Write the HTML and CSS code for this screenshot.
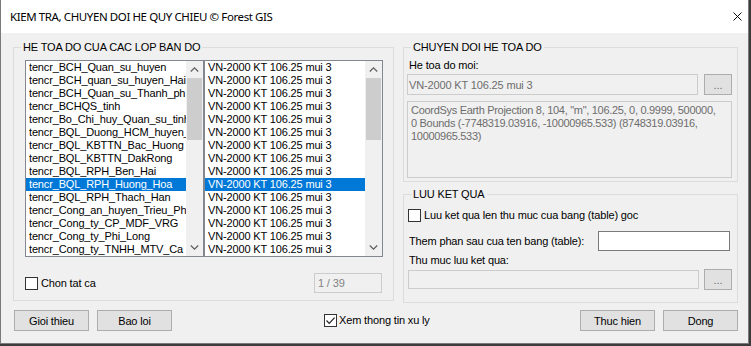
FILE: index.html
```html
<!DOCTYPE html>
<html>
  <head>
    <meta charset="UTF-8">
    <title>KIEM TRA, CHUYEN DOI HE QUY CHIEU</title>
    <link rel="stylesheet" href="styles.css">
  </head>
  <body>
    <div class="window">
      <div class="titlebar">
        <span class="title">KIEM TRA, CHUYEN DOI HE QUY CHIEU © Forest GIS</span>
        <svg class="close" width="9" height="9" viewBox="0 0 9 9">
          <path d="M0.5 0.5 L8.5 8.5 M8.5 0.5 L0.5 8.5" stroke="#111" stroke-width="1" fill="none"/>
        </svg>
      </div>

      <div class="main">
        <fieldset class="group layers">
          <legend>HE TOA DO CUA CAC LOP BAN DO</legend>
          <div class="layers-body">
            <div class="lists">
              <div class="listbox">
                <ul class="items">
                  <li>tencr_BCH_Quan_su_huyen</li>
                  <li>tencr_BCH_quan_su_huyen_Hai</li>
                  <li>tencr_BCH_Quan_su_Thanh_ph</li>
                  <li>tencr_BCHQS_tinh</li>
                  <li>tencr_Bo_Chi_huy_Quan_su_tinh</li>
                  <li>tencr_BQL_Duong_HCM_huyen_</li>
                  <li>tencr_BQL_KBTTN_Bac_Huong</li>
                  <li>tencr_BQL_KBTTN_DakRong</li>
                  <li>tencr_BQL_RPH_Ben_Hai</li>
                  <li class="selected">tencr_BQL_RPH_Huong_Hoa</li>
                  <li>tencr_BQL_RPH_Thach_Han</li>
                  <li>tencr_Cong_an_huyen_Trieu_Ph</li>
                  <li>tencr_Cong_ty_CP_MDF_VRG</li>
                  <li>tencr_Cong_ty_Phi_Long</li>
                  <li>tencr_Cong_ty_TNHH_MTV_Ca</li>
                </ul>
                <div class="scrollbar">
                  <div class="arrow">
                    <svg width="9" height="5" viewBox="0 0 9 5"><path d="M0.8 4.5 L4.5 0.9 L8.2 4.5" stroke="#606060" stroke-width="1.3" fill="none"/></svg>
                  </div>
                  <div class="track"><div class="thumb"></div></div>
                  <div class="arrow">
                    <svg width="9" height="5" viewBox="0 0 9 5"><path d="M0.8 0.5 L4.5 4.1 L8.2 0.5" stroke="#606060" stroke-width="1.3" fill="none"/></svg>
                  </div>
                </div>
              </div>
              <div class="listbox">
                <ul class="items">
                  <li>VN-2000 KT 106.25 mui 3</li>
                  <li>VN-2000 KT 106.25 mui 3</li>
                  <li>VN-2000 KT 106.25 mui 3</li>
                  <li>VN-2000 KT 106.25 mui 3</li>
                  <li>VN-2000 KT 106.25 mui 3</li>
                  <li>VN-2000 KT 106.25 mui 3</li>
                  <li>VN-2000 KT 106.25 mui 3</li>
                  <li>VN-2000 KT 106.25 mui 3</li>
                  <li>VN-2000 KT 106.25 mui 3</li>
                  <li class="selected">VN-2000 KT 106.25 mui 3</li>
                  <li>VN-2000 KT 106.25 mui 3</li>
                  <li>VN-2000 KT 106.25 mui 3</li>
                  <li>VN-2000 KT 106.25 mui 3</li>
                  <li>VN-2000 KT 106.25 mui 3</li>
                  <li>VN-2000 KT 106.25 mui 3</li>
                </ul>
                <div class="scrollbar">
                  <div class="arrow">
                    <svg width="9" height="5" viewBox="0 0 9 5"><path d="M0.8 4.5 L4.5 0.9 L8.2 4.5" stroke="#606060" stroke-width="1.3" fill="none"/></svg>
                  </div>
                  <div class="track"><div class="thumb"></div></div>
                  <div class="arrow">
                    <svg width="9" height="5" viewBox="0 0 9 5"><path d="M0.8 0.5 L4.5 4.1 L8.2 0.5" stroke="#606060" stroke-width="1.3" fill="none"/></svg>
                  </div>
                </div>
              </div>
            </div>
            <div class="select-row">
              <label class="check"><span class="box"></span>Chon tat ca</label>
              <div class="counter">1 / 39</div>
            </div>
          </div>
        </fieldset>

        <div class="side">
          <fieldset class="group convert">
            <legend>CHUYEN DOI HE TOA DO</legend>
            <div class="convert-body">
              <div class="field-label">He toa do moi:</div>
              <div class="field-row">
                <div class="textbox disabled">VN-2000 KT 106.25 mui 3</div>
                <button class="browse">...</button>
              </div>
              <div class="memo">
                CoordSys Earth Projection 8, 104, "m", 106.25, 0, 0.9999, 500000,<br>
                0 Bounds (-7748319.03916, -10000965.533) (8748319.03916,<br>
                10000965.533)
              </div>
            </div>
          </fieldset>

          <fieldset class="group result">
            <legend>LUU KET QUA</legend>
            <div class="result-body">
              <label class="check"><span class="box"></span>Luu ket qua len thu muc cua bang (table) goc</label>
              <div class="suffix-row">
                <span class="suffix-label">Them phan sau cua ten bang (table):</span>
                <div class="textbox suffix"></div>
              </div>
              <div class="field-label folder-label">Thu muc luu ket qua:</div>
              <div class="field-row folder-row">
                <div class="textbox disabled"></div>
                <button class="browse">...</button>
              </div>
            </div>
          </fieldset>
        </div>
      </div>

      <div class="footer">
        <button class="btn">Gioi thieu</button>
        <button class="btn">Bao loi</button>
        <label class="check show-log">
          <span class="box">
            <svg width="11" height="11" viewBox="0 0 11 11"><path d="M1.5 5.5 L4.2 8.3 L9.6 2.6" stroke="#222" stroke-width="1.2" fill="none"/></svg>
          </span>Xem thong tin xu ly
        </label>
        <button class="btn run">Thuc hien</button>
        <button class="btn">Dong</button>
      </div>
    </div>
  </body>
</html>
```

FILE: styles.css
```css
* {
  box-sizing: border-box;
}

body {
  margin: 0;
  background-color: #3c3c3c;
  font-family: "Liberation Sans", Arial, sans-serif;
  font-size: 11px;
  letter-spacing: -0.15px;
  color: #000;
}

.window {
  width: 749px;
  height: 344px;
  background-color: #f0f0f0;
  border: 1px solid #7a7a7a;
  border-top: none;
}

.titlebar {
  height: 33px;
  background-color: #fff;
  display: flex;
  align-items: center;
  justify-content: space-between;
  padding: 0 6px 0 9px;
}

.title {
  font-family: "Noto Sans", sans-serif;
  font-size: 11.5px;
  letter-spacing: -0.4px;
}

.close {
  display: block;
}

.main {
  display: flex;
  align-items: flex-start;
  gap: 9px;
  padding: 8px 10px 0 12px;
  height: 270px;
}

/* group boxes */

.group {
  margin: 0;
  padding: 0;
  min-width: 0;
  border: 1px solid #dcdcdc;
}

.group legend {
  margin-left: 7px;
  padding: 0 2px;
  line-height: 13px;
}

.layers {
  width: 381px;
  height: 260px;
}

.layers-body {
  padding: 6px 10px 0 11px;
}

.lists {
  display: flex;
}

.listbox {
  width: 179px;
  height: 197px;
  display: flex;
  background-color: #fff;
  border: 1px solid #828790;
}

.items {
  flex: 1;
  min-width: 0;
  margin: 0;
  padding: 0;
  list-style: none;
  overflow: hidden;
}

.items li {
  height: 13px;
  line-height: 13px;
  padding-left: 3px;
  white-space: nowrap;
  overflow: hidden;
}

.items li.selected {
  background-color: #0078d7;
  color: #fff;
}

.scrollbar {
  width: 17px;
  display: flex;
  flex-direction: column;
  background-color: #f0f0f0;
}

.scrollbar .arrow {
  height: 17px;
  display: flex;
  align-items: center;
  justify-content: center;
}

.scrollbar .arrow svg {
  display: block;
}

.track {
  flex: 1;
}

.thumb {
  height: 62px;
  margin: 0 1px;
  background-color: #cdcdcd;
}

.select-row {
  display: flex;
  align-items: center;
  justify-content: space-between;
  margin-top: 16px;
  padding: 0 1px 0 0;
}

.counter {
  width: 68px;
  height: 20px;
  line-height: 18px;
  padding-left: 3px;
  border: 1px solid #cccccc;
  color: #838383;
}

/* checkboxes */

.check {
  display: flex;
  align-items: center;
  gap: 3px;
  line-height: 13px;
}

.check .box {
  width: 13px;
  height: 13px;
  display: flex;
  align-items: center;
  justify-content: center;
  background-color: #fff;
  border: 1px solid #333;
}

.check .box svg {
  display: block;
}

/* right column */

.side {
  width: 335px;
}

.convert {
  height: 141px;
}

.convert-body {
  padding: 5px 5px 0 3px;
}

.field-label {
  line-height: 13px;
  padding-left: 2px;
}

.field-row {
  display: flex;
  align-items: center;
  justify-content: space-between;
  margin-top: 2px;
  height: 21px;
}

.textbox {
  height: 21px;
  display: flex;
  align-items: center;
  padding-left: 1px;
  border: 1px solid #7a7a7a;
  background-color: #fff;
}

.textbox.disabled {
  width: 291px;
  background-color: #f0f0f0;
  border-color: #cccccc;
  color: #6d6d6d;
}

.browse {
  width: 28px;
  height: 21px;
  padding: 0;
  font-family: inherit;
  font-size: 11px;
  color: #6d6d6d;
  background-color: #e1e1e1;
  border: 1px solid #adadad;
}

.memo {
  height: 77px;
  margin-top: 6px;
  padding: 2px 3px;
  line-height: 13px;
  letter-spacing: -0.3px;
  white-space: nowrap;
  overflow: hidden;
  color: #6d6d6d;
  background-color: #f0f0f0;
  border: 1px solid #cccccc;
}

.result {
  height: 115px;
  margin-top: 6px;
}

.result-body {
  padding: 8px 5px 0 4px;
}

.suffix-row {
  display: flex;
  align-items: center;
  justify-content: space-between;
  margin-top: 9px;
  padding-left: 1px;
}

.textbox.suffix {
  width: 132px;
  height: 20px;
  margin-right: 2px;
}

.folder-label {
  margin-top: 3px;
  padding-left: 1px;
}

.folder-row .textbox.disabled {
  height: 19px;
}

/* bottom buttons */

.footer {
  display: flex;
  align-items: center;
  gap: 8px;
  padding: 7px 10px 0 13px;
}

.btn {
  width: 75px;
  height: 21px;
  padding: 0;
  font-family: inherit;
  font-size: 11px;
  letter-spacing: inherit;
  color: #000;
  background-color: #e1e1e1;
  border: 1px solid #adadad;
}

.show-log {
  margin-left: 144px;
  gap: 2px;
}

.run {
  margin-left: auto;
}
```
